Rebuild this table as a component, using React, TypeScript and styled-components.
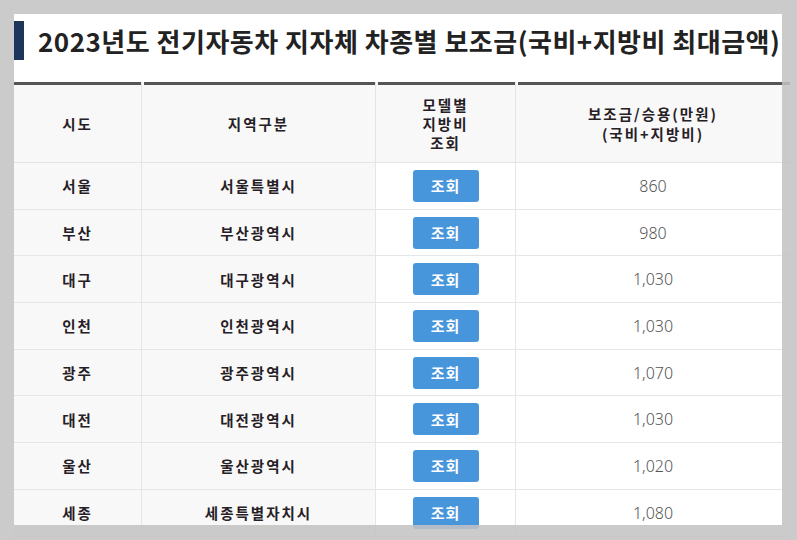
import styled, { createGlobalStyle } from "styled-components";

const GlobalStyle = createGlobalStyle`
  html, body {
    margin: 0;
    padding: 0;
    background: #ffffff;
  }
  body {
    font-family: "Noto Sans CJK KR", "Noto Sans", sans-serif;
    color: #222;
  }
`;

type Row = {
  sido: string;
  region: string;
  amount: string;
};

const rows: Row[] = [
  { sido: "서울", region: "서울특별시", amount: "860" },
  { sido: "부산", region: "부산광역시", amount: "980" },
  { sido: "대구", region: "대구광역시", amount: "1,030" },
  { sido: "인천", region: "인천광역시", amount: "1,030" },
  { sido: "광주", region: "광주광역시", amount: "1,070" },
  { sido: "대전", region: "대전광역시", amount: "1,030" },
  { sido: "울산", region: "울산광역시", amount: "1,020" },
  { sido: "세종", region: "세종특별자치시", amount: "1,080" },
];

export default function App() {
  return (
    <>
      <GlobalStyle />
      <Page>
        <TitleBar>
          <TitleMark />
          <Title>2023년도 전기자동차 지자체 차종별 보조금(국비+지방비 최대금액)</Title>
        </TitleBar>
        <Table>
          <colgroup>
            <col style={{ width: 127 }} />
            <col style={{ width: 234 }} />
            <col style={{ width: 140 }} />
            <col style={{ width: 275 }} />
          </colgroup>
          <thead>
            <tr>
              <Th>시도</Th>
              <Th>지역구분</Th>
              <Th $lineHeight={19}>
                모델별
                <br />
                지방비
                <br />
                조회
              </Th>
              <Th $lineHeight={20}>
                보조금/승용(만원)
                <br />
                (국비+지방비)
              </Th>
            </tr>
          </thead>
          <tbody>
            {rows.map((r) => (
              <tr key={r.sido}>
                <NameCell>{r.sido}</NameCell>
                <NameCell>{r.region}</NameCell>
                <Td>
                  <LookupBtn type="button">조회</LookupBtn>
                </Td>
                <AmountCell>{r.amount}</AmountCell>
              </tr>
            ))}
          </tbody>
        </Table>
      </Page>
      {/* 바깥 회색 프레임 */}
      <Frame />
    </>
  );
}

const Page = styled.div`
  padding: 14px 0 0 14px;
  width: 797px;
  height: 540px;
  box-sizing: border-box;
  overflow: hidden;
`;

const TitleBar = styled.div`
  display: flex;
  align-items: center;
  gap: 14px;
  height: 46px;
  padding-top: 3px;
  margin-bottom: 19px;
`;

const TitleMark = styled.span`
  flex: none;
  width: 10px;
  height: 39px;
  background: #1c355a;
`;

const Title = styled.h1`
  margin: 0;
  font-size: 26px;
  font-weight: 700;
  color: #222;
  white-space: nowrap;
  letter-spacing: 0.5px;
`;

const Table = styled.table`
  table-layout: fixed;
  width: 776px;
  border-collapse: separate;
  border-spacing: 0;
`;

const Th = styled.th<{ $lineHeight?: number }>`
  height: 81px;
  box-sizing: border-box;
  padding: 3px 4px 0;
  font-size: 14.5px;
  font-weight: 700;
  letter-spacing: 2px;
  line-height: ${(p) => (p.$lineHeight ? `${p.$lineHeight}px` : "20px")};
  color: #262026;
  text-align: center;
  border-bottom: 1px solid #e4e4e4;
  background: linear-gradient(#555, #555) right top / calc(100% - 2px) 3px
      no-repeat,
    #f8f8f8;

  &:first-child {
    background-size: 100% 3px, auto;
  }

  & + & {
    border-left: 1px solid #e4e4e4;
  }
`;

const Td = styled.td`
  height: 46.7px;
  box-sizing: border-box;
  padding: 0 4px;
  text-align: center;
  border-bottom: 1px solid #e6e6e6;
  background: #fff;

  & + & {
    border-left: 1px solid #e6e6e6;
  }
`;

const NameCell = styled(Td)`
  background: #f8f8f8;
  font-size: 14.5px;
  font-weight: 700;
  letter-spacing: 2px;
  color: #262026;
`;

const AmountCell = styled(Td)`
  font-family: "Noto Sans", sans-serif;
  font-size: 16px;
  font-weight: 300;
  color: #555;
`;

const LookupBtn = styled.button`
  width: 66px;
  height: 32px;
  border: none;
  border-radius: 3px;
  background: #4796dc;
  color: #fff;
  font-family: "Noto Sans CJK KR", sans-serif;
  font-size: 15px;
  font-weight: 700;
  letter-spacing: 1px;
  cursor: pointer;
`;

const Frame = styled.div`
  position: fixed;
  top: 0;
  left: 0;
  width: 797px;
  height: 540px;
  box-sizing: border-box;
  border-style: solid;
  border-width: 14px 15px 15px 14px;
  border-color: rgba(195, 195, 195, 0.86);
  pointer-events: none;
`;
